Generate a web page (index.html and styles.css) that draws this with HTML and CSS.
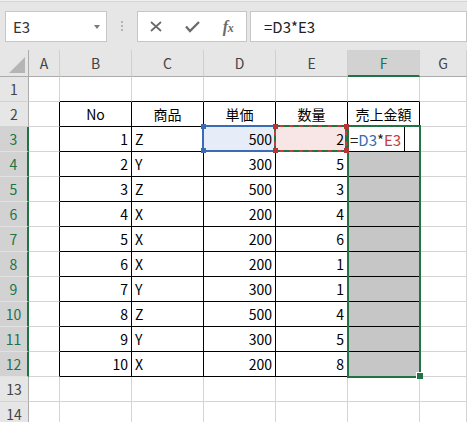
FILE: index.html
```html
<!DOCTYPE html>
<html lang="ja">
<head>
<meta charset="utf-8">
<link rel="stylesheet" href="styles.css">
</head>
<body>
<div class="toolbar">
  <div class="namebox"><span class="name">E3</span><span class="dd"></span></div>
  <div class="grip"><i></i><i></i><i></i></div>
  <div class="fbtns">
    <span class="fbtn"><svg width="12" height="11" viewBox="0 0 12 11"><path d="M1 1L11 10M11 1L1 10" stroke="#6b6b6b" stroke-width="1.7" fill="none"/></svg></span>
    <span class="fbtn"><svg width="15" height="12" viewBox="0 0 15 12"><path d="M1 5.5L5 10L14 1" stroke="#6b6b6b" stroke-width="2.3" fill="none"/></svg></span>
    <span class="fbtn fx"><i>f<small>x</small></i></span>
  </div>
  <div class="formula">=D3*E3</div>
</div>
<div class="sheet">
  <div class="corner"><span class="tri"></span></div>
  <div class="ch">A</div><div class="ch">B</div><div class="ch">C</div><div class="ch">D</div><div class="ch">E</div><div class="ch sel">F</div><div class="ch">G</div>

  <div class="rh">1</div><div class="c"></div><div class="c tt"></div><div class="c tt"></div><div class="c tt"></div><div class="c tt"></div><div class="c tt"></div><div class="c"></div>

  <div class="rh">2</div><div class="c tl"></div><div class="c t ctr">No</div><div class="c t ctr">商品</div><div class="c t ctr">単価</div><div class="c t ctr">数量</div><div class="c t ctr">売上金額</div><div class="c"></div>

  <div class="rh sel">3</div><div class="c tl"></div><div class="c t num">1</div><div class="c t">Z</div><div class="c t num refd">500</div><div class="c t num refe">2</div><div class="c t edit"><span class="editor">=<span class="rd">D3</span>*<span class="re">E3</span></span></div><div class="c"></div>

  <div class="rh sel">4</div><div class="c tl"></div><div class="c t num">2</div><div class="c t">Y</div><div class="c t num">300</div><div class="c t num">5</div><div class="c t gray"></div><div class="c"></div>

  <div class="rh sel">5</div><div class="c tl"></div><div class="c t num">3</div><div class="c t">Z</div><div class="c t num">500</div><div class="c t num">3</div><div class="c t gray"></div><div class="c"></div>

  <div class="rh sel">6</div><div class="c tl"></div><div class="c t num">4</div><div class="c t">X</div><div class="c t num">200</div><div class="c t num">4</div><div class="c t gray"></div><div class="c"></div>

  <div class="rh sel">7</div><div class="c tl"></div><div class="c t num">5</div><div class="c t">X</div><div class="c t num">200</div><div class="c t num">6</div><div class="c t gray"></div><div class="c"></div>

  <div class="rh sel">8</div><div class="c tl"></div><div class="c t num">6</div><div class="c t">X</div><div class="c t num">200</div><div class="c t num">1</div><div class="c t gray"></div><div class="c"></div>

  <div class="rh sel">9</div><div class="c tl"></div><div class="c t num">7</div><div class="c t">Y</div><div class="c t num">300</div><div class="c t num">1</div><div class="c t gray"></div><div class="c"></div>

  <div class="rh sel">10</div><div class="c tl"></div><div class="c t num">8</div><div class="c t">Z</div><div class="c t num">500</div><div class="c t num">4</div><div class="c t gray"></div><div class="c"></div>

  <div class="rh sel">11</div><div class="c tl"></div><div class="c t num">9</div><div class="c t">Y</div><div class="c t num">300</div><div class="c t num">5</div><div class="c t gray"></div><div class="c"></div>

  <div class="rh sel">12</div><div class="c tl"></div><div class="c t num">10</div><div class="c t">X</div><div class="c t num">200</div><div class="c t num">8</div><div class="c t gray"></div><div class="c"></div>

  <div class="rh">13</div><div class="c"></div><div class="c"></div><div class="c"></div><div class="c"></div><div class="c"></div><div class="c"></div><div class="c"></div>

  <div class="rh">14</div><div class="c"></div><div class="c"></div><div class="c"></div><div class="c"></div><div class="c"></div><div class="c"></div><div class="c"></div>

  <div class="overlay">
    <div class="hl-d"><span class="h h-tl blue"></span><span class="h h-bl blue"></span></div>
    <div class="hl-e"><span class="h h-tl red"></span><span class="h h-bl red"></span><span class="h h-tr red"></span><span class="h h-br red"></span></div>
    <div class="selection"></div>
    <div class="fill-handle"></div>
  </div>
</div>
</body>
</html>
```

FILE: styles.css
```css
html, body {
  margin: 0;
  padding: 0;
}
body {
  width: 467px;
  height: 422px;
  overflow: hidden;
  background: #fff;
  font-family: "Noto Sans CJK JP", "Noto Sans", sans-serif;
  color: #000;
}

/* ---------- formula bar ---------- */
.toolbar {
  height: 50px;
  box-sizing: border-box;
  padding-top: 11px;
  display: flex;
  align-items: flex-start;
  background: linear-gradient(#efefef 0 1px, #d6d6d6 1px 2px, #e6e6e6 2px);
}
.namebox {
  box-sizing: border-box;
  width: 102px;
  height: 31px;
  margin-left: 5px;
  background: #fff;
  border: 1px solid #c6c6c6;
  display: flex;
  align-items: center;
  padding: 0 6px 0 7px;
  font-size: 15px;
  color: #333;
}
.name { flex: 1; }
.dd {
  width: 0;
  height: 0;
  border-left: 3px solid transparent;
  border-right: 3px solid transparent;
  border-top: 4px solid #7a7a7a;
}
.grip {
  display: flex;
  flex-direction: column;
  gap: 2px;
  margin: 10px 14px 0 14px;
}
.grip i {
  width: 2px;
  height: 2px;
  background: #b3b3b3;
}
.fbtns {
  box-sizing: border-box;
  width: 110px;
  height: 31px;
  background: #fff;
  border: 1px solid #c6c6c6;
  display: flex;
}
.fbtn {
  flex: 1;
  display: flex;
  align-items: center;
  justify-content: center;
}
.fx i {
  font-family: "Liberation Serif", serif;
  font-style: italic;
  font-weight: bold;
  font-size: 16px;
  color: #6b6b6b;
  letter-spacing: -0.5px;
}
.fx small { font-size: 12px; }
.formula {
  box-sizing: border-box;
  width: 217px;
  height: 31px;
  margin-left: 3px;
  background: #fff;
  border: 1px solid #c6c6c6;
  padding-left: 13px;
  display: flex;
  align-items: center;
  font-size: 15px;
  color: #222;
}

/* ---------- sheet grid ---------- */
.sheet {
  position: relative;
  display: grid;
  grid-template-columns: 29px 31px repeat(5, 72px) 1fr;
  grid-template-rows: 27px repeat(14, 25px);
  font-size: 14px;
}
.sheet > div { box-sizing: border-box; }
.corner {
  background: #e6e6e6;
  border-right: 1px solid #ababab;
  border-bottom: 1px solid #ababab;
  position: relative;
}
.tri {
  position: absolute;
  right: 3px;
  bottom: 3px;
  width: 0;
  height: 0;
  border-left: 16px solid transparent;
  border-bottom: 16px solid #b5b5b5;
}
.ch {
  background: #e6e6e6;
  border-bottom: 1px solid #ababab;
  border-right: 1px solid #d0d0d0;
  display: flex;
  align-items: center;
  justify-content: center;
  color: #444;
  font-size: 14px;
}
.ch.sel {
  background: #d2d2d2;
  border-bottom: 2px solid #217346;
  color: #217346;
  padding-top: 1px;
}
.rh {
  background: #e6e6e6;
  border-right: 1px solid #ababab;
  border-bottom: 1px solid #d2d2d2;
  display: flex;
  align-items: center;
  justify-content: center;
  color: #444;
  font-size: 14px;
}
.rh.sel {
  background: #d2d2d2;
  border-right: 2px solid #217346;
  border-bottom-color: #e2e2e2;
  color: #217346;
}
.c {
  border-right: 1px solid #d4d4d4;
  border-bottom: 1px solid #d4d4d4;
  display: flex;
  align-items: center;
  padding: 0 3px;
  white-space: nowrap;
  overflow: visible;
}
.c.t { border-right-color: #000; border-bottom-color: #000; }
.c.tl { border-right-color: #000; }
.c.tt { border-bottom-color: #000; }
.num { justify-content: flex-end; }
.ctr { justify-content: center; }
.gray { background: #c6c6c6; }
.refd { background: #e7edf8; }
.refe { background: #f8e6e6; }
.c.edit {
  padding: 0;
  align-items: stretch;
  position: relative;
  z-index: 2;
}
.editor {
  box-sizing: border-box;
  width: 57px;
  flex: none;
  padding-left: 2px;
  border-right: 1px solid #000;
  display: flex;
  align-items: center;
  color: #222;
  font-size: 15px;
  background: #fff;
}
.rd { color: #3b6bb4; }
.re { color: #c43e3e; }

/* ---------- overlays ---------- */
.overlay {
  position: absolute;
  inset: 0;
  display: grid;
  grid-template-columns: 29px 31px repeat(5, 72px) 1fr;
  grid-template-rows: 27px repeat(14, 25px);
  pointer-events: none;
  z-index: 3;
}
.hl-d {
  grid-column: 5;
  grid-row: 4;
  margin: -2px 0 0 -2px;
  border: 2px solid #3b6bb4;
  position: relative;
}
.hl-e {
  grid-column: 6;
  grid-row: 4;
  margin: -2px 1px 0 -2px;
  border: 2px solid #c43e3e;
  position: relative;
}
.hl-e::before {
  content: "";
  position: absolute;
  inset: -2px;
  border: 2px dashed #217346;
}
.selection {
  grid-column: 7;
  grid-row: 4 / 14;
  margin: -2px -1px -1px -1px;
  border: 2px solid #217346;
}
.fill-handle {
  grid-column: 7;
  grid-row: 13;
  justify-self: end;
  align-self: end;
  width: 6px;
  height: 6px;
  margin: 0 -3px -2px 0;
  background: #217346;
  box-shadow: -1px -1px 0 0 #fff;
}
.h {
  position: absolute;
  width: 5px;
  height: 5px;
}
.h.blue { background: #3b6bb4; }
.h.red { background: #b83535; }
.h-tl { left: -3px; top: -3px; }
.h-bl { left: -3px; bottom: -3px; }
.h-tr { right: -4px; top: -3px; }
.h-br { right: -4px; bottom: -3px; }
```
